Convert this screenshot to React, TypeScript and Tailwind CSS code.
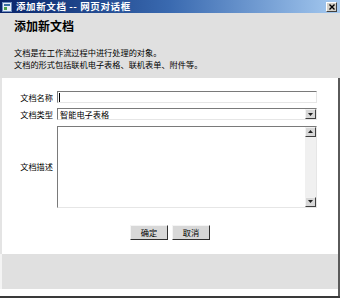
const font = { fontFamily: '"Noto Sans CJK SC", "Noto Sans", sans-serif' };

const Sunken = ({ className, children }: { className: string; children?: React.ReactNode }) => (
  <div className={`border-t border-l border-t-[#7a7a7a] border-l-[#7a7a7a] border-b border-r border-b-[#e6e6e6] border-r-[#e6e6e6] bg-white ${className}`}>
    {children}
  </div>
);

const ArrowBtn = ({ up }: { up?: boolean }) => (
  <div className="w-[11px] h-[10px] bg-[#d8d8d8] border-t border-l border-[#f2f2f2] border-b border-r border-b-[#404040] border-r-[#404040] flex items-center justify-center">
    <svg width="5" height="3" viewBox="0 0 5 3">
      <path d={up ? 'M0 3 L2.5 0 L5 3 Z' : 'M0 0 L5 0 L2.5 3 Z'} fill="#222" />
    </svg>
  </div>
);

export default function App() {
  return (
    <div className="w-[340px] h-[298px] flex flex-col bg-white overflow-hidden" style={font}>
      {/* title bar */}
      <div className="h-[13px] flex items-center bg-gradient-to-r from-[#0a246a] via-[#3a6ab0] to-[#a6caf0] pl-[2px] pr-[3px]">
        <svg width="10" height="10" viewBox="0 0 10 10">
          <rect x="0.5" y="0.5" width="9" height="9" fill="#e8eef8" stroke="#6f8fc0" />
          <rect x="2" y="2" width="6" height="2" fill="#3a6ea5" />
          <rect x="2" y="5" width="3" height="3" fill="#4aa04a" />
        </svg>
        <span className="ml-[4px] text-[9.5px] leading-none font-bold text-white tracking-[0.6px]">添加新文档 -- 网页对话框</span>
        <div className="ml-auto w-[11px] h-[10px] bg-[#d4d0c8] border border-t-white border-l-white border-b-[#404040] border-r-[#404040] flex items-center justify-center">
          <svg width="6" height="6" viewBox="0 0 6 6">
            <path d="M0.5 0.5 L5.5 5.5 M5.5 0.5 L0.5 5.5" stroke="#000" strokeWidth="1.4" />
          </svg>
        </div>
      </div>

      {/* header */}
      <div className="h-[65px] bg-[#e0e0e0] pl-[14px] pt-[5px]">
        <div className="text-[12px] leading-[16px] font-bold text-black">添加新文档</div>
        <div className="mt-[13px] text-[8.2px] leading-[11.5px] text-black">
          <div>文档是在工作流过程中进行处理的对象。</div>
          <div>文档的形式包括联机电子表格、联机表单、附件等。</div>
        </div>
      </div>

      {/* body */}
      <div className="flex-1 flex flex-col border-l-2 border-l-[#e4e4e4] border-r-2 border-r-[#5a5a5a]">
        <div className="grid grid-cols-[51px_260px] gap-x-[4px] gap-y-[5px] mt-[13px] text-[8.2px] text-black">
          <div className="flex items-center justify-end">文档名称</div>
          <Sunken className="h-[12px] flex items-center">
            <div className="ml-[1px] w-px h-[9px] bg-black" />
          </Sunken>
          <div className="flex items-center justify-end">文档类型</div>
          <Sunken className="h-[12px] flex items-center pl-[2px]">
            <span className="flex-1 leading-none">智能电子表格</span>
            <ArrowBtn />
          </Sunken>
          <div className="flex items-center justify-end">文档描述</div>
          <Sunken className="h-[82px] flex justify-end">
            <div className="w-[11px] flex flex-col bg-[#f0f0f0]">
              <ArrowBtn up />
              <div className="flex-1" />
              <ArrowBtn />
            </div>
          </Sunken>
        </div>
        <div className="flex gap-[4px] ml-[128px] mt-[17px]">
          {['确定', '取消'].map((t) => (
            <div
              key={t}
              className="w-[38px] h-[15px] bg-[#d8d8d8] border border-t-[#f4f4f4] border-l-[#f4f4f4] border-b-[#303030] border-r-[#303030] flex items-center justify-center text-[8.2px] text-black"
            >
              {t}
            </div>
          ))}
        </div>
      </div>

      {/* footer band */}
      <div className="h-[35px] bg-[#e0e0e0] border-l-2 border-l-[#f4f4f4] border-r-2 border-r-[#5a5a5a]" />
      <div className="h-[7px] bg-white border-r-2 border-r-[#5a5a5a]" />
      <div className="h-[2px] bg-[#3a3a3a]" />
    </div>
  );
}
